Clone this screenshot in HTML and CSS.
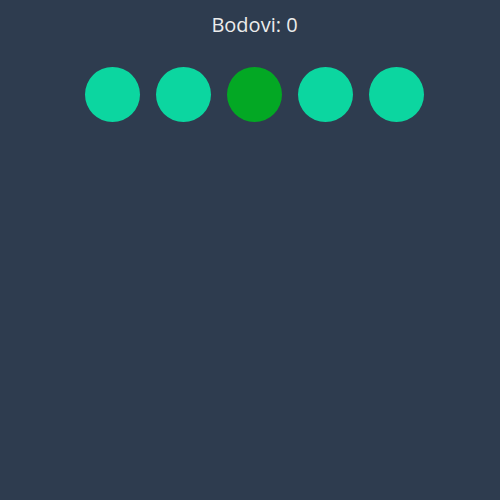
FILE: index.html
```html
<!DOCTYPE html>
<html lang="hr">
<head>
<meta charset="utf-8">
<title>Bodovi</title>
<link rel="stylesheet" href="styles.css">
</head>
<body>
<div class="game">
  <div class="score">Bodovi: 0</div>
  <div class="circles">
    <div class="circle"></div>
    <div class="circle"></div>
    <div class="circle active"></div>
    <div class="circle"></div>
    <div class="circle"></div>
  </div>
</div>
</body>
</html>
```
FILE: styles.css
```css
html, body {
  margin: 0;
  padding: 0;
  height: 100%;
  background: #2e3c4f;
}
.game {
  padding: 11px 0 0 9px;
  display: flex;
  flex-direction: column;
  align-items: center;
  font-family: "Open Sans", sans-serif;
}
.score {
  color: #ececec;
  font-size: 20px;
  line-height: 28px;
}
.circles {
  margin-top: 28px;
  display: flex;
  gap: 16px;
}
.circle {
  width: 55px;
  height: 55px;
  border-radius: 50%;
  background: #0cd6a0;
}
.circle.active {
  background: #03a824;
}
```
